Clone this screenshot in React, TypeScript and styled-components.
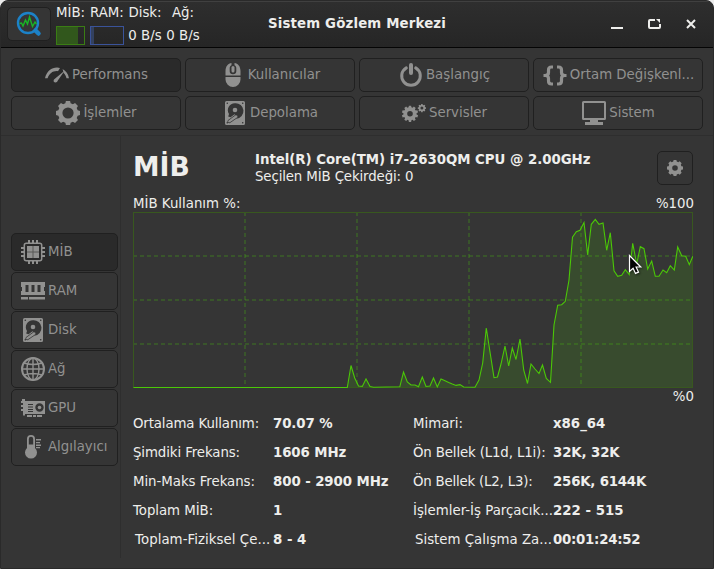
import React from "react";
import styled, { createGlobalStyle } from "styled-components";

const GlobalStyle = createGlobalStyle`
  * { box-sizing: border-box; }
  body {
    margin: 0;
    background: #ececec;
    font: 13.33px/16px "DejaVu Sans", sans-serif;
    color: #eeeeec;
    overflow: hidden;
  }
  svg { display: block; flex: none; }
`;

const Window = styled.div`
  width: 714px;
  height: 569px;
  display: flex;
  flex-direction: column;
  background: #353535;
  border: 1px solid #2a2a2a;
  border-radius: 8px 8px 0 0;
  overflow: hidden;
`;

const TitleBar = styled.header`
  height: 47px;
  flex: none;
  display: grid;
  grid-template-columns: 210px 1fr 210px;
  border-top: 1px solid #404040;
  border-bottom: 1px solid #050505;
  background: linear-gradient(#2e2e2e, #262626);
`;

const TitleLeft = styled.div`
  display: flex;
  padding: 5px 0 0 6px;
`;

const Button = styled.button<{ $active?: boolean }>`
  display: flex;
  align-items: center;
  justify-content: center;
  margin: 0;
  padding: 0;
  border: 1px solid #202020;
  border-radius: 5px;
  background: ${(p) => (p.$active ? "#2a2a2a" : "#353535")};
  color: #919190;
  font: inherit;
`;

const AppButton = styled(Button)`
  width: 44px;
  height: 34px;
  flex: none;
  margin-right: 5px;
`;

const Meter = styled.div<{ $width: number }>`
  width: ${(p) => p.$width}px;
  height: 40px;
  flex: none;
  margin-top: -2px;
  margin-right: 5px;
  display: flex;
  flex-direction: column;
  gap: 6px;
  white-space: nowrap;
`;

const Rate = styled(Meter)`
  align-items: center;
  margin-right: 6px;
  gap: 7px;
`;

const Bar = styled.div<{ $blue?: boolean }>`
  height: 19px;
  margin-top: -1px;
  border: 1px solid ${(p) => (p.$blue ? "#3a539a" : "#3a7d14")};
  display: flex;
`;

const BarFill = styled.div<{ $blue?: boolean; $width: number }>`
  width: ${(p) => p.$width}px;
  background: ${(p) => (p.$blue ? "#33415f" : "#31571c")};
`;

const Title = styled.h1`
  margin: 0;
  padding-top: 14px;
  font-size: 13.33px;
  line-height: 16px;
  letter-spacing: 0.15px;
  text-align: center;
`;

const WindowControls = styled.div`
  display: flex;
  justify-content: flex-end;
  gap: 22px;
  padding: 15px 16px 0 0;

  svg:last-child { margin-left: 1px; }
`;

const Nav = styled.nav`
  flex: none;
  height: 88px;
  display: grid;
  grid-template-columns: repeat(4, 170px);
  grid-template-rows: 34px 34px;
  gap: 4px;
  padding: 10px;
  border-bottom: 1px solid #2e2e2e;
`;

const NavButton = styled(Button)`
  gap: 3px;
  padding-left: 1px;
`;

const Text = styled.span<{ $shift?: number }>`
  white-space: nowrap;
  margin-top: ${(p) => p.$shift ?? 0}px;
`;

const Body = styled.div`
  flex: 1;
  display: flex;
  padding-left: 10px;
`;

const Sidebar = styled.aside`
  width: 110px;
  height: 422px;
  padding-top: 97px;
  border-right: 1px solid #2e2e2e;
  display: flex;
  flex-direction: column;
  gap: 1px;
`;

const SideButton = styled(Button)`
  width: 107px;
  height: 38px;
  flex: none;
  justify-content: flex-start;
  gap: 3px;
  padding-left: 9px;
`;

const Main = styled.main`
  width: 560px;
  margin-left: 12px;
  display: flex;
  flex-direction: column;
`;

const Heading = styled.section`
  display: flex;
  height: 58px;
`;

const Device = styled.h2`
  width: 122px;
  margin: 0;
  padding-top: 15px;
  font-size: 26.67px;
  line-height: 32px;
`;

const Details = styled.div`
  flex: 1;
  padding-top: 15px;
  line-height: 17px;
`;

const DeviceName = styled.b`
  letter-spacing: -0.03px;
`;

const DeviceCore = styled.div`
  letter-spacing: -0.12px;
`;

const SettingsButton = styled(Button)`
  width: 36px;
  height: 34px;
  margin-top: 15px;
`;

const ChartCaption = styled.div<{ $end?: boolean }>`
  display: flex;
  justify-content: ${(p) => (p.$end ? "flex-end" : "space-between")};
  height: 18px;
  line-height: ${(p) => (p.$end ? 16 : 20)}px;
  margin-right: -1px;
`;

const ChartFrame = styled.div`
  position: relative;
  height: 177px;
`;

const Pointer = styled.svg`
  position: absolute;
  left: 494px;
  top: 42px;
  filter: drop-shadow(1px 1px 1px #0008);
`;

const Stats = styled.dl`
  margin: 2px 0 0;
  display: grid;
  grid-template-columns: repeat(4, 140px);
  grid-auto-rows: 29px;
  line-height: 29px;
  white-space: nowrap;
`;

const Term = styled.dt<{ $inset?: boolean; $tracking: number }>`
  padding-left: ${(p) => (p.$inset ? 2 : 0)}px;
  letter-spacing: ${(p) => p.$tracking}px;
`;

const Value = styled.dd<{ $tracking: number }>`
  margin: 0;
  font-weight: bold;
  letter-spacing: ${(p) => p.$tracking}px;
`;

const gearPath = (cx: number, cy: number, r: number, n: number, depth: number) => {
  const pts: string[] = [];
  for (let i = 0; i < n; i++) {
    const a = (i * 2 * Math.PI) / n;
    const s = (2 * Math.PI) / n;
    [[-0.34, r - depth], [-0.22, r], [0.22, r], [0.34, r - depth]].forEach(([t, q]) =>
      pts.push(`${(cx + q * Math.sin(a + t * s)).toFixed(2)},${(cy - q * Math.cos(a + t * s)).toFixed(2)}`)
    );
  }
  return "M" + pts.join("L") + "Z";
};
const ring = (cx: number, cy: number, r: number) =>
  `M${cx - r},${cy}a${r},${r} 0 1 0 ${2 * r},0a${r},${r} 0 1 0 ${-2 * r},0Z`;

type IconProps = { children: React.ReactNode; size?: number };
const Icon = ({ children, size = 24 }: IconProps) => (
  <svg width={size} height={size} viewBox="0 0 24 24" fill="#919190" stroke="none">
    {children}
  </svg>
);

const GaugeIcon = () => (
  <Icon>
    <path d="M0 15.300C1.500 8.500 6.500 4.600 12 4.600q1.800 0 3 .5L13 8.200C8 7.600 4.300 10.500 2.600 15.300Z" />
    <path d="M17.600 6C21 8 23.300 11 24 15.300H21.500C21 13 20 11.300 18.600 10Z" />
    <path d="M19.800 7.500 13 17.200q-.8 2.600-2.900 2.400-2.300-.7-1.100-3Z" />
  </Icon>
);
const GearIcon = ({ size = 24 }: { size?: number }) => (
  <Icon size={size}>
    <path fillRule="evenodd" d={gearPath(12, 12, 12.2, 8, 2.2) + ring(12, 12, size === 24 ? 5.6 : 4.2)} />
  </Icon>
);
const MouseIcon = () => (
  <Icon>
    <path d="M10.500 0C7 .5 4.500 3.500 4.500 8v4.500h15V8c0-4.500-2.500-7.500-6-8v2.200c1.300.5 1.800 1.500 1.800 3v3c0 2-1.200 3-3.300 3s-3.300-1-3.300-3v-3c0-1.500.5-2.500 1.800-3Z" />
    <rect x="10.500" y="3" width="3" height="6.500" rx="1.500" />
    <path d="M4.500 14h15v2.500a7.500 7.500 0 0 1-15 0Z" />
  </Icon>
);
const DriveIcon = () => (
  <Icon>
    <path
      fillRule="evenodd"
      d={"M3.500 0h17a1.500 1.500 0 0 1 1.500 1.500v21a1.500 1.500 0 0 1-1.500 1.500h-17A1.500 1.500 0 0 1 2 22.500v-21A1.500 1.500 0 0 1 3.500 0Z" + ring(4.3, 2.3, 0.8) + ring(19.7, 2.3, 0.8) + ring(4.3, 21.7, 0.8) + ring(19.7, 21.7, 0.8)}
    />
    <path fill="#353535" d="M12 2.200a7 7 0 0 0-6 10.800l-.8 2.500 2.300.8 4-3 3 2.500-1.200 2A7.300 7.300 0 0 0 12 2.200Z" />
    <circle cx="12" cy="9" r="2.300" />
    <path stroke="#353535" strokeWidth="0.8" d="M5 19.500 12.500 14a1.700 1.700 0 0 1 2 2.500L7 21.600a1.500 1.500 0 0 1-2-2.100Z" />
  </Icon>
);
const PowerIcon = () => (
  <Icon>
    <path d="M7.300 4.900a9.300 9.300 0 1 0 9.400 0" fill="none" stroke="#919190" strokeWidth="3" strokeLinecap="round" />
    <rect x="10" y="0" width="4" height="12" rx="2" />
  </Icon>
);
const ServicesIcon = () => (
  <Icon>
    <path fillRule="evenodd" d={gearPath(8, 12.8, 8.2, 10, 1.6) + ring(8, 12.8, 2.8)} />
    <path fillRule="evenodd" d={gearPath(19.9, 7.1, 4.200, 8, 0.9) + ring(19.9, 7.1, 1.5)} />
  </Icon>
);
const BracesIcon = () => (
  <Icon>
    <path
      fill="none"
      stroke="#919190"
      strokeWidth="3.200"
      d="M10 4H8.500Q5.500 4 5.500 7v2.500Q5.500 12.500 2 12.500H.5 2q3.500 0 3.500 3V18q0 3 3 3H10M14 4h1.500q3 0 3 3v2.500q0 3 3.500 3h1.500H22q-3.500 0-3.500 3V18q0 3-3 3H14"
    />
  </Icon>
);
const MonitorIcon = () => (
  <Icon>
    <path fillRule="evenodd" d="M1.500 0h21A1.500 1.500 0 0 1 24 1.500v16a1.500 1.500 0 0 1-1.500 1.500h-21A1.500 1.500 0 0 1 0 17.500v-16A1.500 1.500 0 0 1 1.500 0ZM2 2v15h20v-15ZM8 19h8v2h5v3H3v-3h5Z" />
  </Icon>
);
const ChipIcon = () => (
  <Icon>
    <path d="M7 0h2v4H7zM11 0h2v4h-2zM15 0h2v4h-2zM7 20h2v4H7zM11 20h2v4h-2zM15 20h2v4h-2zM0 7h4v2H0zM0 11h4v2H0zM0 15h4v2H0zM20 7h4v2h-4zM20 11h4v2h-4zM20 15h4v2h-4z" />
    <rect x="3.300" y="3.300" width="17.400" height="17.400" rx="2" fill="none" stroke="#919190" strokeWidth="1.500" />
    <path d="M6 6h12v12H6z" />
    <path d="M12 6v12M6 12h12" fill="none" stroke="#585857" strokeWidth="1" />
  </Icon>
);
const MemoryIcon = () => (
  <Icon>
    <path fillRule="evenodd" d="M0 3h24v5h-1v4h1v4H0v-4h1V8H0ZM4.500 6v7h3V6ZM10.500 6v7h3V6ZM16.500 6v7h3V6ZM0 18h7v2.500H0ZM8 18h16v2.500H8Z" />
  </Icon>
);
const GlobeIcon = () => (
  <Icon>
    <g fill="none" stroke="#919190" strokeWidth="1.400">
      <circle cx="12" cy="12" r="11" strokeWidth="2" />
      <ellipse cx="12" cy="12" rx="6" ry="11" />
      <path d="M12 1v22M1 12h22M3 6q9 3 18 0M3 18q9-3 18 0" />
    </g>
  </Icon>
);
const GpuIcon = () => (
  <Icon>
    <path fillRule="evenodd" d={"M1 3h3v2h20v13H4v1.500H2V15H0v-2h2v-2H0V9h2V7H0V5h1ZM7 8v1h5V8ZM7 10.500v1h5v-1ZM7 13v1h5v-1ZM7 15v1h5v-1Z" + ring(18.500, 11.500, 4.200)} />
    <path d="M6 19h5v2H6zM12 19h3v2h-3zM16 19h5v2h-5z" />
    <path fillRule="evenodd" d={ring(18.500, 11.500, 1.800)} />
  </Icon>
);
const ThermometerIcon = () => (
  <Icon>
    <path fillRule="evenodd" d="M10 0a4 4 0 0 1 4 4v9a6 6 0 1 1-8 0V4a4 4 0 0 1 4-4ZM10 1.800A2.200 2.200 0 0 0 7.800 4v5.500h4.400V4A2.200 2.200 0 0 0 10 1.800Z" />
    <path d="M15 4h5v1.500h-5zM15 7h4v1.300h-4zM15 9.500h5V11h-5zM15 12h4v1.300h-4z" />
  </Icon>
);

const AppLogo = () => (
  <svg width="26" height="26" viewBox="0 0 26 26" fill="none">
    <circle cx="12" cy="12" r="10" stroke="#1c82c8" strokeWidth="2.400" />
    <path d="m19.500 19.500 3 3" stroke="#1c82c8" strokeWidth="4.500" strokeLinecap="round" />
    <path d="M3.500 12.500 5.500 12l1.500 3L9.500 9l2 4 2-7 3 9.500L19 11l1.500 2" stroke="#19b526" strokeWidth="1.400" />
  </svg>
);

const chartPoints: [number, number][] = [
  [133.5, 387.5], [347.3, 387.5], [351, 365.5], [354.7, 378], [358.5, 386], [362.3, 386.4], [366, 379], [370, 386.5],
  [373.5, 387.3], [399.8, 386.8], [403.5, 372], [407.3, 382], [411, 385], [415, 385], [418.5, 386.8], [422.3, 377],
  [426, 386.5], [430, 386], [433.5, 378], [437.3, 387], [441, 379], [445, 380.7], [448.7, 382.5], [452.3, 384],
  [456, 385.4], [460, 384.6], [463.7, 387], [475, 387.3], [479, 380], [482.7, 363], [486.3, 328], [490, 352],
  [494, 377.7], [497.5, 377], [501, 364], [505, 346], [508.7, 366], [512.3, 348], [516, 359.5], [520, 339],
  [523.7, 370], [527.5, 383.5], [531, 364], [535, 369], [539, 373.5], [542.5, 365], [546.3, 378.5], [550.5, 382.3],
  [554, 325], [557.7, 305.2], [561.7, 304.7], [565.3, 301.3], [569, 280], [572.5, 237.3], [576.3, 231.7],
  [580, 230.3], [584, 222.5], [587.7, 255], [591.3, 224.3], [595.3, 219.3], [599, 224.3], [603, 223], [606.7, 250.3],
  [610.3, 232.7], [614, 270.7], [617.7, 276.3], [621.7, 275.3], [625.3, 269.7], [629.3, 274.7], [632.7, 243.3],
  [636.7, 264], [640.3, 246.7], [644, 248.7], [647.7, 269], [651.7, 261], [655.3, 276.3], [659, 276.3], [663, 270],
  [666.7, 272.7], [670.3, 265.7], [674.3, 270], [677.7, 247], [681.7, 255.7], [685.7, 256.3], [689.3, 264.7],
  [692.8, 256.3],
];
const linePath = "M" + chartPoints.map(([x, y]) => `${(x - 133).toFixed(1)},${(y - 212).toFixed(1)}`).join("L");

const Chart = () => (
  <svg width="560" height="177" viewBox="0 0 560 177" fill="none">
    <path d={linePath + "L559.5,176V176H0.500Z"} fill="#4bc807" fillOpacity="0.15" />
    <g stroke="#4bc807" strokeOpacity="0.22" strokeWidth="2" strokeDasharray="4 3">
      <path d="M0 44H560M0 88H560M0 132H560" />
      <path d="M112 0V176M224 0V176M336 0V176M448 0V176" />
    </g>
    <rect x="0.500" y="0.500" width="559" height="175" stroke="#38581f" />
    <path d={linePath} stroke="#4bc807" strokeWidth="1.100" />
  </svg>
);

const navItems: [string, () => React.JSX.Element][] = [
  ["Performans", GaugeIcon],
  ["Kullanıcılar", MouseIcon],
  ["Başlangıç", PowerIcon],
  ["Ortam Değişkenl...", BracesIcon],
  ["İşlemler", () => <GearIcon />],
  ["Depolama", DriveIcon],
  ["Servisler", ServicesIcon],
  ["Sistem", MonitorIcon],
];

const sideItems: [string, () => React.JSX.Element][] = [
  ["MİB", ChipIcon],
  ["RAM", MemoryIcon],
  ["Disk", DriveIcon],
  ["Ağ", GlobeIcon],
  ["GPU", GpuIcon],
  ["Algılayıcı", ThermometerIcon],
];

type Stat = { term: string; value: string; termTracking?: number; valueTracking?: number };
const stats: Stat[] = [
  { term: "Ortalama Kullanım:", value: "70.07 %", termTracking: -0.13, valueTracking: -0.1 },
  { term: "Mimari:", value: "x86_64" },
  { term: "Şimdiki Frekans:", value: "1606 MHz", termTracking: -0.1, valueTracking: -0.1 },
  { term: "Ön Bellek (L1d, L1i):", value: "32K, 32K", termTracking: -0.14, valueTracking: -0.12 },
  { term: "Min-Maks Frekans:", value: "800 - 2900 MHz", termTracking: -0.04, valueTracking: -0.08 },
  { term: "Ön Bellek (L2, L3):", value: "256K, 6144K", termTracking: -0.2, valueTracking: -0.2 },
  { term: "Toplam MİB:", value: "1", termTracking: -0.05 },
  { term: "İşlemler-İş Parçacık...", value: "222 - 515" },
  { term: "Toplam-Fiziksel Çe...", value: "8 - 4", termTracking: 0.05 },
  { term: "Sistem Çalışma Za...", value: "00:01:24:52", valueTracking: -0.27 },
];

export default function App() {
  return (
    <>
      <GlobalStyle />
      <Window>
        <TitleBar>
          <TitleLeft>
            <AppButton><AppLogo /></AppButton>
            <Meter $width={29}>
              MİB:
              <Bar><BarFill $width={21} /></Bar>
            </Meter>
            <Meter $width={34}>
              RAM:
              <Bar $blue><BarFill $blue $width={3} /></Bar>
            </Meter>
            <Rate $width={32}><span>Disk:</span><span>0 B/s</span></Rate>
            <Rate $width={32}><span>Ağ:</span><span>0 B/s</span></Rate>
          </TitleLeft>
          <Title>Sistem Gözlem Merkezi</Title>
          <WindowControls>
            <svg width="14" height="14" fill="none" stroke="#eeeeec" strokeWidth="2"><path d="M1 11h12" /></svg>
            <svg width="16" height="14" fill="none" stroke="#eeeeec" strokeWidth="2">
              <path d="M9 3H4Q3 3 3 4v6q0 1 1 1h9q1 0 1-1V7" />
              <path d="M10 2h4v4Z" fill="#eeeeec" stroke="none" />
            </svg>
            <svg width="12" height="14" fill="none" stroke="#eeeeec" strokeWidth="2"><path d="m2 3 8 8m0-8-8 8" /></svg>
          </WindowControls>
        </TitleBar>
        <Nav>
          {navItems.map(([label, Glyph], i) => (
            <NavButton key={label} $active={i === 0}><Glyph /><Text>{label}</Text></NavButton>
          ))}
        </Nav>
        <Body>
          <Sidebar>
            {sideItems.map(([label, Glyph], i) => (
              <SideButton key={label} $active={i === 0}><Glyph /><Text $shift={-1}>{label}</Text></SideButton>
            ))}
          </Sidebar>
          <Main>
            <Heading>
              <Device>MİB</Device>
              <Details>
                <DeviceName>Intel(R) Core(TM) i7-2630QM CPU @ 2.00GHz</DeviceName>
                <DeviceCore>Seçilen MİB Çekirdeği: 0</DeviceCore>
              </Details>
              <SettingsButton><GearIcon size={16} /></SettingsButton>
            </Heading>
            <ChartCaption><span>MİB Kullanım %:</span><span>%100</span></ChartCaption>
            <ChartFrame>
              <Chart />
              <Pointer width="16" height="22" viewBox="0 0 16 22">
                <path d="M2.500 1.500v16l3.600-3.300 2.400 5.200 3-1.300-2.400-5.100h4.700Z" fill="#050505" stroke="#fff" strokeWidth="1.200" />
              </Pointer>
            </ChartFrame>
            <ChartCaption $end>%0</ChartCaption>
            <Stats>
              {stats.map((s, i) => (
                <React.Fragment key={s.term}>
                  <Term $inset={i >= 8} $tracking={s.termTracking ?? 0}>{s.term}</Term>
                  <Value $tracking={s.valueTracking ?? 0}>{s.value}</Value>
                </React.Fragment>
              ))}
            </Stats>
          </Main>
        </Body>
      </Window>
    </>
  );
}
